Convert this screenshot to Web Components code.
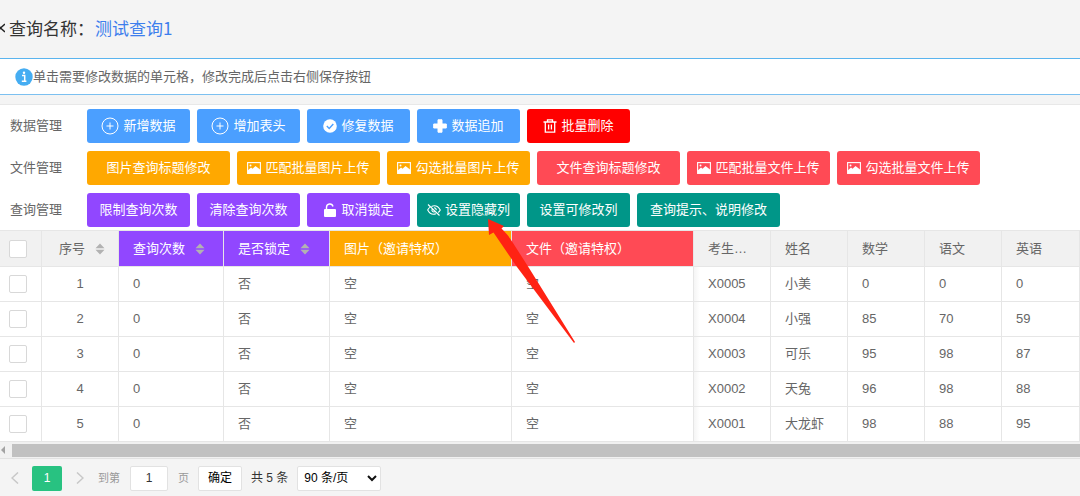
<!DOCTYPE html>
<html lang="zh-CN">
<head>
<meta charset="utf-8">
<title>查询管理</title>
<style>
body { margin: 0; background: #f4f4f4; color: #666; font: 13px/20px "Liberation Sans", "Noto Sans CJK SC", sans-serif; }
</style>
</head>
<body>
<query-page></query-page>
<script>
const icons = {
  plus: '<svg width="18" height="18" viewBox="0 0 18 18" fill="none" stroke="#fff"><circle cx="9" cy="9" r="8"/><path d="M9 5.5v7M5.5 9h7"/></svg>',
  check: '<svg width="14" height="14" viewBox="0 0 14 14"><circle cx="7" cy="7" r="6.8" fill="#fff"/><path d="M3.8 7.1l2.4 2.3 4.1-4.4" fill="none" stroke="#4b9fff" stroke-width="1.4"/></svg>',
  add: '<svg width="14" height="14" viewBox="0 0 14 14"><path d="M5 .8h4V5h4.300v4H9v4.200H5V9H.7V5H5z" fill="#fff" stroke="#fff" stroke-linejoin="round"/></svg>',
  trash: '<svg width="14" height="14" viewBox="0 0 14 14" fill="none" stroke="#fff" stroke-width="1.300"><path d="M.5 3h13M4.500 3V.8h5V3M2.300 3v10.200h9.400V3M5.600 5.500v5M8.400 5.500v5"/></svg>',
  image: '<svg width="14" height="12" viewBox="0 0 14 12"><rect x=".6" y=".6" width="12.800" height="10.800" fill="none" stroke="#fff" stroke-width="1.100"/><circle cx="3.500" cy="3.400" r="1" fill="#fff"/><path d="M1 11V8.300L4 5.500l1.500 1.300L8.500 4 13 7.500V11z" fill="#fff"/></svg>',
  unlock: '<svg width="14" height="14" viewBox="0 0 14 14"><rect x="1" y="6" width="12" height="8" rx="1" fill="#fff"/><path d="M3.500 6.500V4.300a3.300 3.300 0 0 1 6.500-.8" fill="none" stroke="#fff" stroke-width="1.400"/></svg>',
  hide: '<svg width="14" height="14" viewBox="0 0 14 14" fill="none" stroke="#fff" stroke-width="1.100"><path d="M1 1.500l11.500 11M4.500 3.500C7.800 2 11.200 3.400 13.300 7c-.6 1.100-1.300 1.900-2.100 2.500M2.800 4.400C1.900 5.100 1.200 6 .7 7c1.900 3.600 5.200 4.900 8.300 3.700M5 6.300c-.5 1.700 1.100 3.100 2.600 2.500M7 4.800c1.300 0 2.300 1 2.200 2.300"/></svg>'
};

function define(name, css, render) {
  customElements.define(name, class extends HTMLElement {
    connectedCallback() {
      if (this.shadowRoot) return;
      const root = this.attachShadow({ mode: 'open' });
      root.innerHTML = '<style>*{box-sizing:border-box}' + css + '</style>' + render(this);
    }
  });
}

define('page-title', `
:host { display: block; height: 58px; padding-top: 16px; }
h1 { display: flex; align-items: center; margin: 0; font: 17px/24px "Noto Sans CJK SC", sans-serif; color: #333; }
svg { flex: none; margin-right: 4px; }
a { margin-left: 1px; color: #3d7eed; text-decoration: none; }`,
() => `<h1><svg width="5" height="12" viewBox="0 0 5 12" fill="none" stroke="#222" stroke-width="1.500"><path d="M5 2L.5 6 5 10M-3 2L.5 6-3 10"/></svg>查询名称：<a href="#"><slot></slot></a></h1>`);

define('notice-bar', `
:host { display: flex; align-items: center; height: 37px; box-sizing: border-box; background: #fff; border-top: 1px solid #5ab4ee; border-bottom: 1px solid #7cc0f0; padding-left: 15px; }
svg { flex: none; }`,
() => `<svg width="18" height="18" viewBox="0 0 18 18"><circle cx="9" cy="9" r="8.700" fill="#45adf2"/><path d="M7 7.500h2.700v5.500M6.800 13.300h4.600" fill="none" stroke="#fff" stroke-width="1.500"/><circle cx="9" cy="4.700" r="1.200" fill="#fff"/></svg><slot></slot>`);

define('tool-row', `
:host { display: flex; align-items: center; gap: 7px; }
span { width: 70px; flex: none; }`,
el => `<span>${el.getAttribute('label')}</span><slot></slot>`);

define('tool-button', `
:host { display: block; width: 103px; }
:host([wide]) { width: 143px; }
button { display: flex; align-items: center; justify-content: center; gap: 4px; width: 100%; height: 34px; padding: 0; border: 0; border-radius: 3px; background: var(--tone); color: #fff; font: inherit; white-space: nowrap; }
svg { flex: none; }`,
el => `<button type="button">${icons[el.getAttribute('icon')] || ''}<slot></slot></button>`);

define('tool-panel', `
:host { display: flex; flex-direction: column; gap: 8px; margin-top: 9px; padding: 4px 10px 3px; background: #fff; border-top: 1px solid #e8e8e8; }
.blue { --tone: #4b9fff; } .del { --tone: #f00; } .orange { --tone: #ffa800; } .red { --tone: #ff4a55; } .violet { --tone: #9147ff; } .green { --tone: #009688; }`,
() => `
<tool-row label="数据管理">
  <tool-button class="blue" icon="plus">新增数据</tool-button>
  <tool-button class="blue" icon="plus">增加表头</tool-button>
  <tool-button class="blue" icon="check">修复数据</tool-button>
  <tool-button class="blue" icon="add">数据追加</tool-button>
  <tool-button class="del" icon="trash">批量删除</tool-button>
</tool-row>
<tool-row label="文件管理">
  <tool-button wide class="orange">图片查询标题修改</tool-button>
  <tool-button wide class="orange" icon="image">匹配批量图片上传</tool-button>
  <tool-button wide class="orange" icon="image">勾选批量图片上传</tool-button>
  <tool-button wide class="red">文件查询标题修改</tool-button>
  <tool-button wide class="red" icon="image">匹配批量文件上传</tool-button>
  <tool-button wide class="red" icon="image">勾选批量文件上传</tool-button>
</tool-row>
<tool-row label="查询管理">
  <tool-button class="violet">限制查询次数</tool-button>
  <tool-button class="violet">清除查询次数</tool-button>
  <tool-button class="violet" icon="unlock">取消锁定</tool-button>
  <tool-button class="green" icon="hide">设置隐藏列</tool-button>
  <tool-button class="green">设置可修改列</tool-button>
  <tool-button wide class="green">查询提示、说明修改</tool-button>
</tool-row>`);

const rows = [
  ['X0005', '小美', 0, 0, 0],
  ['X0004', '小强', 85, 70, 59],
  ['X0003', '可乐', 95, 98, 87],
  ['X0002', '天兔', 96, 98, 88],
  ['X0001', '大龙虾', 98, 88, 95]
];
const sort = '<svg width="10" height="12" viewBox="0 0 10 12" fill="#b2b2b2"><path d="M5 .5L9.500 5.300h-9zM5 11.500l4.500-4.800h-9z"/></svg>';

define('data-table', `
:host { display: block; overflow: hidden; background: #fff; }
table { width: 100%; table-layout: fixed; border-collapse: separate; border-spacing: 0; border-top: 1px solid #e6e6e6; }
th, td { height: 35px; padding: 0 14px; border: solid #e6e6e6; border-width: 0 1px 1px 0; font-weight: 400; text-align: left; overflow: hidden; white-space: nowrap; text-overflow: ellipsis; }
th { height: 36px; background: #f1f1f1; }
th svg { margin-left: 10px; vertical-align: -2px; }
.pick { padding: 0 9px; }
.no { text-align: center; }
th.no { padding: 0 12px 0 16px; }
.violet { background: #9147ff; color: #fff; } .orange { background: #ffa800; color: #fff; } .red { background: #ff4a55; color: #fff; }
td.name { background: linear-gradient(90deg, #f5f5f5, #fff 6px); }
input { appearance: none; display: block; width: 18px; height: 18px; margin: 0; border: 1px solid #d8d8d8; border-radius: 2px; background: #fff; }
.w42 { width: 42px; } .w77 { width: 77px; } .w105 { width: 105px; } .w106 { width: 106px; } .w182 { width: 182px; }`,
() => `<table>
<colgroup><col class="w42"><col class="w77"><col class="w105"><col class="w106"><col class="w182"><col class="w182"><col class="w77"><col class="w77"><col class="w77"><col class="w77"><col></colgroup>
<thead><tr><th class="pick"><input type="checkbox" aria-label="全选"></th><th class="no">序号${sort}</th><th class="violet">查询次数${sort}</th><th class="violet">是否锁定${sort}</th><th class="orange">图片（邀请特权）</th><th class="red">文件（邀请特权）</th><th>考生编号</th><th>姓名</th><th>数学</th><th>语文</th><th>英语</th></tr></thead>
<tbody>${rows.map((r, i) => `<tr><td class="pick"><input type="checkbox" aria-label="选择第${i + 1}行"></td><td class="no">${i + 1}</td><td>0</td><td>否</td><td>空</td><td>空</td><td class="name">${r[0]}</td>${r.slice(1).map(v => `<td>${v}</td>`).join('')}</tr>`).join('')}</tbody>
</table>`);

define('scroll-track', `
:host { display: flex; align-items: center; height: 17px; background: #f1f1f1; border-bottom: 1px solid #e2e2e2; }
svg { flex: none; margin-right: 7px; }
div { flex: 1; height: 13px; background: #c1c1c1; }`,
() => `<svg width="5" height="8" viewBox="0 0 5 8"><path d="M5 0v8L1 4z" fill="#a3a3a3"/></svg><div></div>`);

define('page-bar', `
:host { display: flex; align-items: center; height: 38px; padding-left: 10px; font-size: 12px; color: #333; }
button, input, select { height: 25px; padding: 0; border: 1px solid #e2e2e2; border-radius: 2px; background: #fff; color: #000; font: inherit; }
.nav { width: 10px; border: 0; background: none; line-height: 0; }
.now { width: 30px; margin: 0 13px 0 12px; border: 0; background: #28c281; color: #fff; }
label { display: flex; align-items: center; gap: 10px; margin-left: 13px; font-size: 11px; color: #999; }
input { width: 38px; text-align: center; color: #333; font-size: 12px; }
.ok { width: 44px; margin: 0 9px; }
select { appearance: none; width: 84px; margin-left: 9px; padding-left: 6px; }
.size { position: relative; }
.size svg { position: absolute; right: 4px; top: 9px; pointer-events: none; }`,
() => `<button class="nav" type="button" aria-label="上一页"><svg width="8" height="12" viewBox="0 0 8 12" fill="none" stroke="#c8c8c8" stroke-width="1.500"><path d="M7 .5L1 6l6 5.500"/></svg></button>
<button class="now" type="button">1</button>
<button class="nav" type="button" aria-label="下一页"><svg width="8" height="12" viewBox="0 0 8 12" fill="none" stroke="#c8c8c8" stroke-width="1.500"><path d="M1 .5L7 6l-6 5.500"/></svg></button>
<label>到第<input type="text" value="1">页</label>
<button class="ok" type="button">确定</button><span>共 5 条</span>
<span class="size"><select aria-label="每页条数"><option>90 条/页</option></select><svg width="10" height="7" viewBox="0 0 10 7" fill="none" stroke="#111" stroke-width="2"><path d="M1 1l4 4 4-4"/></svg></span>`);

define('pointer-arrow', `
:host { position: absolute; left: 484px; top: 216px; pointer-events: none; }
svg { display: block; }`,
() => `<svg width="94" height="130" viewBox="0 0 94 130"><path d="M4 3L20 10 17.500 12.500C20 15 25 20 29 27L45 52 91 126 90 127 33 51 9.500 16.500 5 19z" fill="#ff2213"/></svg>`);

define('query-page', `
:host { display: block; position: relative; }`,
() => `<page-title>测试查询1</page-title>
<notice-bar>单击需要修改数据的单元格，修改完成后点击右侧保存按钮</notice-bar>
<tool-panel></tool-panel>
<data-table></data-table>
<scroll-track></scroll-track>
<page-bar></page-bar>
<pointer-arrow></pointer-arrow>`);
</script>
</body>
</html>
